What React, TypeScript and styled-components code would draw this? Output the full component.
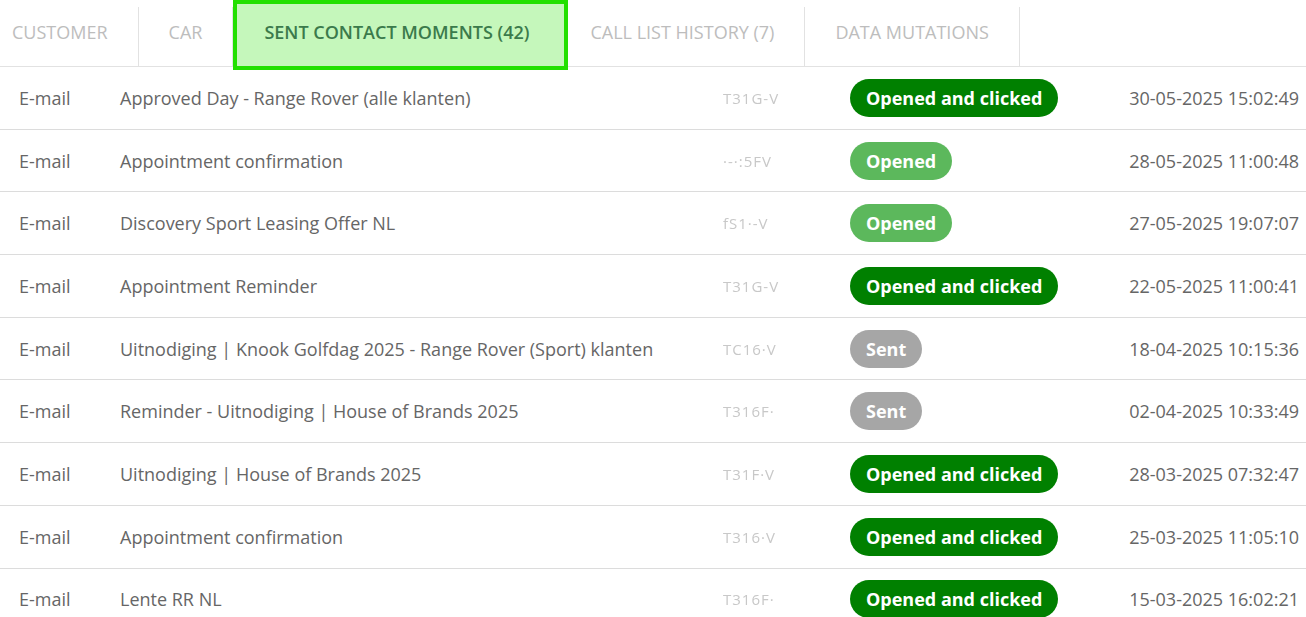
import React from 'react'
import styled, { createGlobalStyle } from 'styled-components'

const GlobalStyle = createGlobalStyle`
    html, body {
        margin: 0;
        padding: 0;
        background: #fff;
        font-family: 'Open Sans', 'Liberation Sans', sans-serif;
        overflow: hidden;
    }
`

const Page = styled.div`
    width: 1306px;
    height: 617px;
    overflow: hidden;
`

const TabBar = styled.div`
    display: flex;
    align-items: flex-start;
    height: 66px;
    border-bottom: 1px solid #e2e2e2;
    margin-left: -18px;
`

const Tab = styled.div<{ $active?: boolean }>`
    display: flex;
    align-items: center;
    box-sizing: border-box;
    height: 59px;
    margin-top: 7px;
    padding: 0 30px 10px;
    font-size: 18px;
    text-transform: uppercase;
    color: #bdbdbd;
    border-right: 1px solid #e2e2e2;

    ${p => p.$active && `
        margin: 0 -7px 0 0;
        height: 70px;
        border: 4px solid #22e000;
        background: #c5f7bb;
        color: #3b7a4b;
        font-weight: 600;
        padding: 0 34px 7px 27px;
        position: relative;
        z-index: 1;
    `}
`

const Table = styled.div`
    display: flex;
    flex-direction: column;
`

const Row = styled.div`
    display: grid;
    grid-template-columns: 101px 603px 127px 1fr auto;
    align-items: center;
    height: 62.7px;
    box-sizing: border-box;
    padding: 0 7px 0 19px;
    border-bottom: 1px solid #dcdcdc;
    color: #666;
    font-size: 18px;
`

const Code = styled.span`
    color: #c8c8c8;
    font-size: 15px;
    letter-spacing: 1px;
    filter: blur(0.5px);
`

const Badge = styled.span<{ $status: 'clicked' | 'opened' | 'sent' }>`
    justify-self: start;
    display: inline-flex;
    align-items: center;
    height: 38px;
    padding: 0 16px;
    border-radius: 19px;
    color: #fff;
    font-weight: 700;
    font-size: 18px;
    background: ${p =>
        p.$status === 'clicked' ? '#008000' : p.$status === 'opened' ? '#5cb85c' : '#a6a6a6'};
`

const DateCell = styled.span`
    text-align: right;
`

type Status = 'clicked' | 'opened' | 'sent'

const rows: { subject: string; code: string; status: Status; date: string }[] = [
    { subject: 'Approved Day - Range Rover (alle klanten)', code: 'T31G-V', status: 'clicked', date: '30-05-2025 15:02:49' },
    { subject: 'Appointment confirmation', code: '·-·:5FV', status: 'opened', date: '28-05-2025 11:00:48' },
    { subject: 'Discovery Sport Leasing Offer NL', code: 'fS1·-V', status: 'opened', date: '27-05-2025 19:07:07' },
    { subject: 'Appointment Reminder', code: 'T31G-V', status: 'clicked', date: '22-05-2025 11:00:41' },
    { subject: 'Uitnodiging | Knook Golfdag 2025 - Range Rover (Sport) klanten', code: 'TC16·V', status: 'sent', date: '18-04-2025 10:15:36' },
    { subject: 'Reminder - Uitnodiging | House of Brands 2025', code: 'T316F·', status: 'sent', date: '02-04-2025 10:33:49' },
    { subject: 'Uitnodiging | House of Brands 2025', code: 'T31F·V', status: 'clicked', date: '28-03-2025 07:32:47' },
    { subject: 'Appointment confirmation', code: 'T316·V', status: 'clicked', date: '25-03-2025 11:05:10' },
    { subject: 'Lente RR NL', code: 'T316F·', status: 'clicked', date: '15-03-2025 16:02:21' },
]

const label: Record<Status, string> = {
    clicked: 'Opened and clicked',
    opened: 'Opened',
    sent: 'Sent',
}

const App = () => {
    return (
        <Page>
            <GlobalStyle />
            <TabBar>
                <Tab>Customer</Tab>
                <Tab>Car</Tab>
                <Tab $active>Sent contact moments (42)</Tab>
                <Tab>Call list history (7)</Tab>
                <Tab>Data mutations</Tab>
            </TabBar>
            <Table>
                {rows.map((r, i) => (
                    <Row key={i}>
                        <span>E-mail</span>
                        <span>{r.subject}</span>
                        <Code>{r.code}</Code>
                        <Badge $status={r.status}>{label[r.status]}</Badge>
                        <DateCell>{r.date}</DateCell>
                    </Row>
                ))}
            </Table>
        </Page>
    )
}

export default App
